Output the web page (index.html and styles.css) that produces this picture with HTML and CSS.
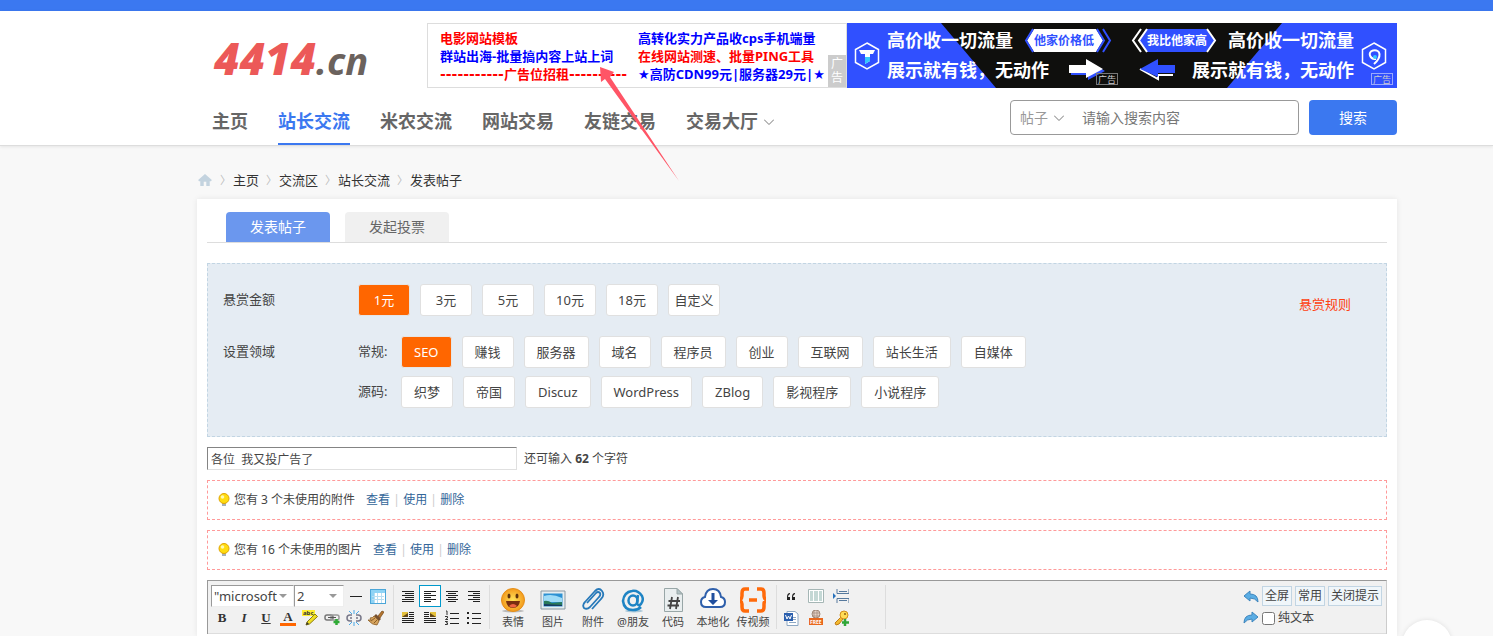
FILE: index.html
```html
<!DOCTYPE html>
<html lang="zh-CN">
<head>
<meta charset="utf-8">
<title>发表帖子 - 站长交流</title>
<link rel="stylesheet" href="styles.css">
</head>
<body>
<div class="topbar"></div>
<header class="header">
  <div class="page">
    <div class="masthead">
      <a class="logo" href="#"><span class="logo-num">4414</span><span class="logo-tld">.cn</span></a>
      <div class="adbox">
        <div class="adcol">
          <a class="red" href="#">电影网站模板</a>
          <a href="#">群站出海-批量搞内容上站上词</a>
          <a class="red" href="#"><span class="dash">-----------</span>广告位招租<span class="dash">----------</span></a>
        </div>
        <div class="adcol">
          <a href="#">高转化实力产品收cps手机端量</a>
          <a class="red" href="#">在线网站测速、批量PING工具</a>
          <a href="#"><span class="star">★</span>高防CDN99元|服务器29元|<span class="star">★</span></a>
        </div>
        <span class="adtag">广告</span>
      </div>
      <a class="banner" href="#">
        <svg viewBox="0 0 275 65">
          <rect width="275" height="65" fill="#3050ff"/>
          <path d="M94 0H275V65H149Z" fill="#0f0f0d"/>
          <path d="M20 20L31.500 26.500V39.500L20 46L8.500 39.500V26.500Z" fill="none" stroke="#fff" stroke-width="1.500"/>
          <path d="M12 27H28L26 31H23V38L18 41V31H14Z" fill="#fff"/><path d="M18 34H23V38L18 41Z" fill="#35c8ff"/>
          <g class="banner-big"><text x="40" y="24">高价收一切流量</text><text x="40" y="54">展示就有钱，无动作</text></g>
          <path d="M187 6H249L256 17.500L249 29H187L180 17.500Z" fill="#fff"/>
          <path d="M186 6L179 17.500L186 29M250 6L257 17.500L250 29M256 6L263 17.500L256 29" fill="none" stroke="#3050ff" stroke-width="2"/>
          <text class="banner-small blue" x="187" y="22">他家价格低</text>
          <path d="M224 44H241V38L258 48L241 57V52H224Z" fill="#3050ff"/>
          <path d="M222 42H239V36L256 46L239 55V50H222Z" fill="#fff"/>
          <rect x="249.500" y="50.500" width="21" height="11" fill="none" stroke="#777"/>
          <text class="banner-tag" x="251" y="60">广告</text>
        </svg>
      </a>
      <a class="banner" href="#">
        <svg viewBox="0 0 275 65">
          <rect width="275" height="65" fill="#3050ff"/>
          <path d="M0 0H160L105 65H0Z" fill="#0f0f0d"/>
          <path d="M252 20L263.500 26.500V39.500L252 46L240.500 39.500V26.500Z" fill="none" stroke="#fff" stroke-width="1.500"/>
          <path d="M254 36C248 37 245 29 251 27.500C259 26 260 34 252 41" fill="none" stroke="#fff" stroke-width="2"/><circle cx="253" cy="34" r="2" fill="#35c8ff"/>
          <g class="banner-big"><text x="106" y="24">高价收一切流量</text><text x="70" y="54">展示就有钱，无动作</text></g>
          <path d="M25 6H84L93 17.500L84 29H25L17 17.500Z" fill="#3050ff"/>
          <path d="M19 6L11 17.500L19 29M25 6L17 17.500L25 29M85 6L93 17.500L85 29" fill="none" stroke="#fff" stroke-width="2"/>
          <text class="banner-small" x="25" y="22">我比他家高</text>
          <path d="M18 46L36 56V52H51" fill="none" stroke="#fff" stroke-width="2"/>
          <path d="M18 46L36 36V42H53V50H36V54Z" fill="#3050ff"/>
          <rect x="249.500" y="50.500" width="21" height="11" fill="none" stroke="#9aa8ff"/>
          <text class="banner-tag" x="251" y="60">广告</text>
        </svg>
      </a>
    </div>
    <div class="navrow">
      <nav class="nav">
        <a href="#">主页</a><a class="on" href="#">站长交流</a><a href="#">米农交流</a><a href="#">网站交易</a><a href="#">友链交易</a><a href="#">交易大厅<svg class="caret" viewBox="0 0 10 10"><path d="M0 2.500L5 7.500L10 2.500"/></svg></a>
      </nav>
      <form class="search">
        <div class="searchbox">
          <button type="button" class="scope">帖子<svg class="caret" viewBox="0 0 10 10"><path d="M0 2.500L5 7.500L10 2.500"/></svg></button>
          <input type="text" aria-label="搜索内容" placeholder="请输入搜索内容">
        </div>
        <button type="submit" class="go">搜索</button>
      </form>
    </div>
  </div>
</header>
<main class="page main">
  <nav class="crumbs">
    <a href="#" aria-label="首页"><svg class="home" viewBox="0 0 16 14"><path d="M8 0L16 7L15 8.500H13.500V14H9.500V9H6.500V14H2.500V8.500H1L0 7Z" fill="#c3d3df"/></svg></a>
    <a href="#">主页</a><a href="#">交流区</a><a href="#">站长交流</a><a href="#">发表帖子</a>
  </nav>
  <section class="card">
    <div class="tabs"><button class="tab on">发表帖子</button><button class="tab">发起投票</button></div>
    <div class="panel">
      <div class="row first">
        <span class="label">悬赏金额</span>
        <div class="chips fixed"><button class="on">1元</button><button>3元</button><button>5元</button><button>10元</button><button>18元</button><button>自定义</button></div>
        <a class="rules" href="#">悬赏规则</a>
      </div>
      <div class="row">
        <span class="label">设置领域</span>
        <div class="fields">
          <div class="field"><span class="sub">常规:</span><div class="chips"><button class="on">SEO</button><button>赚钱</button><button>服务器</button><button>域名</button><button>程序员</button><button>创业</button><button>互联网</button><button>站长生活</button><button>自媒体</button></div></div>
          <div class="field"><span class="sub">源码:</span><div class="chips"><button>织梦</button><button>帝国</button><button>Discuz</button><button>WordPress</button><button>ZBlog</button><button>影视程序</button><button>小说程序</button></div></div>
        </div>
      </div>
    </div>
    <div class="titlerow"><input type="text" aria-label="标题" value="各位&nbsp; 我又投广告了"><span>还可输入 <b>62</b> 个字符</span></div>
    <div class="notice"><svg class="bulb" viewBox="0 0 12 14"><path d="M4 9H8V13H4Z" fill="#a8b0b8"/><circle cx="6" cy="5.500" r="5" fill="#ffdc10" stroke="#e0a400"/><circle cx="4.500" cy="4" r="1.800" fill="#fff9b0"/></svg><span>您有 3 个未使用的附件</span><span class="acts"><a href="#">查看</a><i>|</i><a href="#">使用</a><i>|</i><a href="#">删除</a></span></div>
    <div class="notice"><svg class="bulb" viewBox="0 0 12 14"><path d="M4 9H8V13H4Z" fill="#a8b0b8"/><circle cx="6" cy="5.500" r="5" fill="#ffdc10" stroke="#e0a400"/><circle cx="4.500" cy="4" r="1.800" fill="#fff9b0"/></svg><span>您有 16 个未使用的图片</span><span class="acts"><a href="#">查看</a><i>|</i><a href="#">使用</a><i>|</i><a href="#">删除</a></span></div>
    <div class="editor">
      <div class="toolbar">
        <div class="group">
          <div class="line">
            <span class="pick wide"><select aria-label="字体"><option>"microsoft yahei"</option></select></span><span class="pick"><select aria-label="字号"><option>2</option></select></span>
            <button class="tool gap" aria-label="分隔线"><svg viewBox="0 0 16 16"><path d="M2 8.500H14" stroke="#222"/></svg></button>
            <button class="tool" aria-label="表格"><svg viewBox="0 0 16 16"><rect x=".5" y="1.500" width="15" height="14" fill="#fff" stroke="#4ba6d8"/><path d="M1 2H15V5H1ZM1 5H4V15H1Z" fill="#8ed3f5"/><path d="M4.500 5V15M7.500 5V15M11.500 5V15M2 8.500H14M2 11.500H14" stroke="#b8def2"/></svg></button>
          </div>
          <div class="line">
            <button class="tool letter" aria-label="粗体"><b>B</b></button>
            <button class="tool letter" aria-label="斜体"><em>I</em></button>
            <button class="tool letter" aria-label="下划线"><u>U</u></button>
            <button class="tool letter color" aria-label="文字颜色">A</button>
            <button class="tool" aria-label="背景色"><svg viewBox="0 0 16 16"><rect x="0" y="0" width="13" height="6" fill="#ffee30"/><text x="1" y="5" class="abc">abc</text><path d="M4 15L5 12L13 4L15.500 6.500L7.500 14Z" fill="#f0df22" stroke="#8a7b12"/><path d="M4 15L5 12L7 14Z" fill="#333"/></svg></button>
            <button class="tool" aria-label="链接"><svg viewBox="0 0 16 16"><rect x="1" y="5" width="8" height="5" rx="2" fill="none" stroke="#777" stroke-width="1.500"/><rect x="7" y="5" width="8" height="5" rx="2" fill="none" stroke="#999" stroke-width="1.500"/><path d="M4 7.500H12" stroke="#555"/><path d="M12.500 9V15M9.500 12H15.500" stroke="#2faa35" stroke-width="2.500"/></svg></button>
            <button class="tool" aria-label="移除链接"><svg viewBox="0 0 16 16"><path d="M6 5H4Q1 5 1 8Q1 11 4 11H6M10 5H12Q15 5 15 8Q15 11 12 11H10M4 8H6M10 8H12" fill="none" stroke="#778" stroke-width="1.500"/><path d="M8 0V4M3 1L6 4M13 1L10 4M8 16V12M3 15L6 12M13 15L10 12" stroke="#49a9e8"/></svg></button>
            <button class="tool" aria-label="清除格式"><svg viewBox="0 0 16 16"><path d="M10 6L14 1L16 2L12 8Z" fill="#b47530" stroke="#744613" stroke-width=".7"/><path d="M8 4L13 9L11 11L6 6Z" fill="#765030"/><path d="M6 6L11 11L9 15Q4 15 0 10L3 10L2 8Q5 8 6 6Z" fill="#d6a35d" stroke="#895c25" stroke-width=".8"/><path d="M3 11L7 8M6 13L9 10" stroke="#895c25"/></svg></button>
          </div>
        </div>
        <div class="group">
          <div class="line">
            <button class="tool" aria-label="自动排版"><svg viewBox="0 0 16 16"><path d="M2 3.500H14M5 5.500H14M2 7.500H14M5 9.500H14M2 11.500H14M2 13.500H14" stroke="#222"/></svg></button>
            <button class="tool active" aria-label="居左"><svg viewBox="0 0 16 16"><path d="M2 3.500H14M2 5.500H9M2 7.500H14M2 9.500H9M2 11.500H14M2 13.500H9" stroke="#222"/></svg></button>
            <button class="tool" aria-label="居中"><svg viewBox="0 0 16 16"><path d="M2 3.500H14M4 5.500H12M2 7.500H14M4 9.500H12M2 11.500H14M4 13.500H12" stroke="#222"/></svg></button>
            <button class="tool" aria-label="居右"><svg viewBox="0 0 16 16"><path d="M2 3.500H14M7 5.500H14M2 7.500H14M7 9.500H14M2 11.500H14M7 13.500H14" stroke="#222"/></svg></button>
          </div>
          <div class="line">
            <button class="tool" aria-label="左浮动"><svg viewBox="0 0 16 16"><rect x="2" y="2" width="6" height="5" fill="#e5c13c"/><path d="M2 7L8 3V7Z" fill="#634716"/><path d="M9 2.500H14M9 4.500H14M9 6.500H14M2 8.500H14M2 10.500H14M2 12.500H14" stroke="#222"/></svg></button>
            <button class="tool" aria-label="右浮动"><svg viewBox="0 0 16 16"><rect x="8" y="2" width="6" height="5" fill="#e5c13c"/><path d="M8 3L14 7H8Z" fill="#634716"/><path d="M2 2.500H7M2 4.500H7M2 6.500H7M2 8.500H14M2 10.500H14M2 12.500H14" stroke="#222"/></svg></button>
            <button class="tool" aria-label="编号列表"><svg viewBox="0 0 16 16"><path d="M6 3.500H15M6 8.500H15M6 13.500H15" stroke="#222"/><path d="M2 1H3V5M1 6.500H3.500V8L1.500 9.500H4M1 11.500H3.500L2.500 13H3.500V14.500H1" fill="none" stroke="#333"/></svg></button>
            <button class="tool" aria-label="项目列表"><svg viewBox="0 0 16 16"><path d="M6 3.500H15M6 8.500H15M6 13.500H15" stroke="#222"/><path d="M1 2H3V4H1ZM1 7H3V9H1ZM1 12H3V14H1Z" fill="#222"/></svg></button>
          </div>
        </div>
        <div class="group bigs">
          <button class="big"><svg viewBox="0 0 26 26"><defs><radialGradient id="face"><stop offset="0" stop-color="#ffe45a"/><stop offset="1" stop-color="#f39a1c"/></radialGradient></defs><ellipse cx="13" cy="24" rx="11" ry="1.500" fill="#bbb"/><circle cx="13" cy="13" r="11.500" fill="url(#face)" stroke="#e58f18"/><ellipse cx="9" cy="9" rx="1.500" ry="2.500" fill="#5f320b"/><ellipse cx="17" cy="9" rx="1.500" ry="2.500" fill="#5f320b"/><path d="M6 14H20Q19 21 13 21Q7 21 6 14Z" fill="#792f10"/><path d="M9 19Q13 15 17 19Q13 22 9 19Z" fill="#ee6542"/></svg>表情</button>
          <button class="big"><svg viewBox="0 0 26 26"><path d="M1 4H25V22H1Z" fill="#e6edf0" stroke="#8998a2"/><path d="M3.500 6.500H22.500V19.500H3.500Z" fill="#2c91d3"/><path d="M4 9Q12 6 22 11V15H4Z" fill="#9edbf7"/><path d="M4 14Q8 13 12 16L22 15V19H4Z" fill="#2a7a5a"/><path d="M4 17L22 18V19H4Z" fill="#173c65"/></svg>图片</button>
          <button class="big"><svg viewBox="0 0 26 26"><path d="M7 16L16 6Q18 4 20 6Q21 8 19 10L10 20Q7 23 4 21Q2 18 5 15L15 4Q19 0 22 4Q25 8 21 12L12 22" fill="none" stroke="#2779b9" stroke-width="1.800"/></svg>附件</button>
          <button class="big"><svg viewBox="0 0 26 26"><ellipse cx="14" cy="24" rx="9" ry="1.500" fill="#aac7d8"/><ellipse cx="13" cy="13.500" rx="4.500" ry="5" fill="none" stroke="#1e84c4" stroke-width="2.500"/><path d="M18 8L17 16Q18 20 21 17Q24 13 22 9Q18 3 12 4Q4 5 3 14Q4 23 13 23Q18 23 21 20" fill="none" stroke="#1e84c4" stroke-width="2.500"/></svg>@朋友</button>
          <button class="big"><svg viewBox="0 0 26 26"><path d="M4.500 1.500H17L22.500 7V24.500H4.500Z" fill="#e9eeef" stroke="#98a6a7"/><path d="M17 1.500V7H22.500Z" fill="#b1c2c4" stroke="#98a6a7"/><path d="M12 10L10 22M18 10L16 22M8.500 14H20M7.500 18.500H19" stroke="#444" stroke-width="1.800"/></svg>代码</button>
          <button class="big"><svg viewBox="0 0 26 26"><path d="M6 20Q1 20 1 15Q1 11 5 10Q6 2 13 2Q20 2 21 10Q25 11 25 15Q25 20 20 20Z" fill="#fff" stroke="#2e5fab" stroke-width="2"/><path d="M11.500 6H14.500V13H18L13 18L8 13H11.500Z" fill="#204f9e"/></svg>本地化</button>
          <button class="big"><svg viewBox="0 0 26 26"><path d="M9 2H5Q2 2 2 6V9Q2 11 0 13Q2 15 2 17V20Q2 24 5 24H9M17 2H21Q24 2 24 6V9Q24 11 26 13Q24 15 24 17V20Q24 24 21 24H17M9 13H17" fill="none" stroke="#ff6a0a" stroke-width="3.500"/></svg>传视频</button>
        </div>
        <div class="group extras">
          <div class="line">
            <button class="tool" aria-label="引用"><svg viewBox="0 0 16 16"><path d="M7 5Q4 5 4 9V12H7V9H5Q5 7 7 6ZM12 5Q9 5 9 9V12H12V9H10Q10 7 12 6Z" fill="#222"/></svg></button>
            <button class="tool" aria-label="分栏"><svg viewBox="0 0 16 16"><path d="M.5 1.500H15.500V14.500H.5Z" fill="#fff" stroke="#a5b6b5"/><path d="M2 3H5V13H2ZM6 3H10V13H6ZM11 3H14V13H11Z" fill="#c4d8d5"/></svg></button>
            <button class="tool" aria-label="分页"><svg viewBox="0 0 16 16"><path d="M4 1V5.500H16V1M4 15V10.500H16V15M6 3.500H14M6 12.500H14" fill="none" stroke="#56799d"/><path d="M0 5L3 8L0 11Z" fill="#2670bc"/></svg></button>
          </div>
          <div class="line">
            <button class="tool" aria-label="Word"><svg viewBox="0 0 16 16"><path d="M5 1.500H12L15 4V15.500H4V1.500Z" fill="#fff" stroke="#8ca7c3"/><path d="M10 7.500H13M10 9.500H13M6 12.500H13" stroke="#8ca7c3"/><rect x="1" y="3" width="9" height="8" fill="#2b5fae"/><path d="M2.500 5L4 9L5.500 6L7 9L8.500 5" fill="none" stroke="#fff"/></svg></button>
            <button class="tool" aria-label="免费信息"><svg viewBox="0 0 16 16"><circle cx="8" cy="4" r="4" fill="#e3d1c7" stroke="#9e887a"/><path d="M4 3H12M4 6H12M6 0V8M9 0V8" stroke="#9e887a" stroke-width=".7"/><rect x="1" y="8" width="14" height="7" fill="#e8681e"/><text x="2" y="14" class="free">FREE</text></svg></button>
            <button class="tool" aria-label="密码"><svg viewBox="0 0 16 16"><path d="M8 7L2 13L3 15L6 14L10 9" fill="#f2ba32" stroke="#c17b13"/><circle cx="11" cy="5" r="4" fill="#ffdc55" stroke="#d18e1e"/><circle cx="12" cy="4" r="1" fill="#8c6014"/><path d="M12 9V16M9 12.500H16" stroke="#30a638" stroke-width="2.500"/></svg></button>
          </div>
        </div>
        <div class="modes">
          <div class="line"><button class="tool" aria-label="撤销"><svg viewBox="0 0 16 16"><path d="M1 8L7 3V6Q15 6 15 14Q12 10 7 10V13Z" fill="#5aade4" stroke="#3e85bd"/></svg></button><button class="mode">全屏</button><button class="mode">常用</button><button class="mode">关闭提示</button></div>
          <div class="line"><button class="tool" aria-label="重做"><svg viewBox="0 0 16 16"><path d="M15 7L9 2V5Q1 5 1 13Q4 9 9 9V12Z" fill="#5aade4" stroke="#3e85bd"/></svg></button><label class="plain"><input type="checkbox">纯文本</label></div>
        </div>
      </div>
    </div>
  </section>
</main>
<button class="float" aria-label="返回顶部"></button>
<svg class="pointer" viewBox="0 0 80 115"><path d="M0 0L14 5L10 10L79 114L5 12L1 15Z" fill="#ff5566"/></svg>
</body>
</html>
```
FILE: styles.css
```css
* { box-sizing: border-box; }
body {
  margin: 0;
  height: 100vh;
  display: flex;
  flex-direction: column;
  overflow: hidden;
  background: #f8f8f8;
  color: #444;
  font: 12px/20px "Noto Sans", "Noto Sans CJK SC", sans-serif;
}
a { color: inherit; text-decoration: none; }
button, input, select { font: inherit; color: inherit; }
button { margin: 0; padding: 0; border: 0; background: none; }
svg { display: block; flex: none; }
.page { padding: 0 96px 0 197px; }
.topbar { flex: none; height: 11px; background: #3b78f0; }
.header { flex: none; background: #fff; border-bottom: 1px solid #ddd; box-shadow: 0 1px 3px rgba(0, 0, 0, .08); }
.masthead { display: flex; padding-top: 12px; }
.logo { display: flex; flex: 1; align-items: baseline; height: 65px; padding: 7px 0 0 17px; font-family: "Open Sans", sans-serif; font-style: italic; font-weight: 800; white-space: nowrap; line-height: 56px; }
.logo-num { color: #ec5958; font-size: 44px; }
.logo-tld { color: #6b625d; font-size: 38px; font-weight: 700; }
.adbox { position: relative; display: flex; width: 420px; height: 65px; padding: 5px 0 0 12px; border: 1px solid #ddd; font-size: 13px; line-height: 18px; font-weight: 700; color: #00f; }
.adcol { display: flex; flex-direction: column; width: 198px; white-space: nowrap; }
.red { color: #f00; }
.dash { font-family: "DejaVu Sans", sans-serif; font-size: 14px; font-weight: 700; line-height: 16px; }
.star { font-family: "DejaVu Sans", sans-serif; font-weight: 400; line-height: 16px; }
.adtag { position: absolute; right: 0; bottom: 0; width: 18px; padding: 2px 3px; background: #ccc; color: #fff; font-size: 12px; line-height: 14px; font-weight: 400; }
.banner { width: 275px; height: 65px; }
.banner svg { width: 275px; height: 65px; }
.banner-big { fill: #fff; font-size: 18px; font-weight: 700; }
.banner-small { fill: #fff; font-size: 12px; font-weight: 700; }
.banner-small.blue { fill: #3050ff; }
.banner-tag { fill: #ccc; font-size: 9px; }
.navrow { display: flex; justify-content: space-between; padding-top: 12px; }
.nav { display: flex; gap: 30px; padding-left: 15px; font-size: 18px; line-height: 43px; font-weight: 700; color: #666; }
.nav a { display: flex; align-items: center; height: 45px; border-bottom: 2px solid transparent; white-space: nowrap; }
.nav .on { color: #3b78f0; border-color: #3b78f0; }
.caret { width: 10px; height: 10px; margin-left: 6px; fill: none; stroke: #777; }
.search { display: flex; gap: 10px; height: 35px; font-size: 14px; }
.searchbox { display: flex; align-items: center; width: 289px; padding-left: 9px; border: 1px solid #999; border-radius: 4px; }
.scope { display: flex; align-items: center; color: #999; }
.searchbox input { flex: 1; min-width: 0; margin-left: 18px; padding: 0; border: 0; outline: 0; background: none; }
.searchbox input::placeholder { color: #777; }
.go { width: 88px; border-radius: 4px; background: #3b78f0; color: #fff; }

.main { flex: 1; min-height: 0; display: flex; flex-direction: column; }
.crumbs { display: flex; align-items: center; padding: 24px 0 9px; font-size: 13px; color: #333; }
.home { width: 16px; height: 12px; }
.crumbs a + a { display: flex; align-items: center; }
.crumbs a + a::before { content: "〉"; width: 13px; margin: 0 0 0 7px; color: #bbb; font-size: 11px; }
.card { flex: 1; padding: 13px 10px 0; background: #fff; box-shadow: 0 0 6px rgba(0, 0, 0, .08); }
.tabs { display: flex; gap: 15px; padding-left: 19px; border-bottom: 1px solid #ddd; }
.tab { width: 104px; height: 30px; border-radius: 4px 4px 0 0; background: #f0f0f0; color: #666; font-size: 14px; }
.tab.on { background: #6b97ee; color: #fff; }
.panel { margin-top: 20px; padding: 20px 35px 28px 15px; border: 1px dashed #c2d5e3; background: #e5ecf3; font-size: 13px; }
.row { display: flex; }
.first { margin-bottom: 20px; }
.label { width: 135px; line-height: 30px; }
.chips { display: flex; flex-wrap: wrap; gap: 10px; }
.chips button { height: 32px; padding: 0 12px; border: 1px solid #e0e0e0; border-radius: 3px; background: #fff; white-space: nowrap; }
.chips.fixed button { width: 52px; padding: 0; }
.chips .on { border-color: #e5e5e5; background: #f60; color: #fff; }
.rules { height: 32px; margin-left: auto; line-height: 40px; color: #ff4010; }
.fields { display: flex; flex-direction: column; gap: 8px; }
.field { display: flex; }
.sub { width: 43px; line-height: 30px; }
.titlerow { display: flex; align-items: center; gap: 7px; margin: 10px 0; }
.titlerow input { width: 310px; height: 23px; padding: 0 3px; border: 1px solid; border-color: #848484 #e0e0e0 #e0e0e0 #848484; background: #fff; }
.notice { display: flex; align-items: center; height: 40px; margin-bottom: 10px; padding-left: 10px; border: 1px dashed #ff9a9a; }
.bulb { width: 12px; height: 14px; margin-right: 4px; }
.acts { display: flex; margin-left: 11px; color: #369; }
.acts i { width: 13px; text-align: center; font-style: normal; color: #ccc; }
.editor { border: 1px solid #999; border-right-color: #ccc; border-bottom: 0; }
.toolbar { display: flex; height: 53px; padding: 4px 3px; border-bottom: 1px solid #ddd; background: #f1f1f1; }
.group { margin-right: 3px; padding-right: 4px; border-right: 1px solid #ddd; }
.line { display: flex; align-items: center; height: 22px; }
.tool { display: flex; align-items: center; justify-content: center; width: 22px; height: 22px; }
.tool svg { width: 16px; height: 16px; }
.tool.active { border: 1px solid #09c; background: #fff; }
.tool.gap { margin-left: 1px; }
.letter { font: 700 13px/16px "Liberation Serif", serif; color: #333; }
.color { height: 16px; border-bottom: 3px solid #f60; width: 16px; margin: 0 3px; line-height: 12px; }
.abc { font-size: 6px; font-weight: 700; fill: #333; }
.free { font-size: 5px; font-weight: 700; fill: #fff; }
.pick { position: relative; width: 50px; }
.pick.wide { width: 83px; }
.pick select { display: block; width: 100%; height: 22px; padding: 0 16px 0 2px; appearance: none; border: 1px solid; border-color: #999 #eee #eee #999; border-radius: 0; background: #fff; font-size: 13px; }
.pick::after { content: ""; position: absolute; right: 7px; top: 9px; border: 4px solid transparent; border-top-color: #999; border-bottom: 0; }
.bigs { display: flex; padding-right: 3px; }
.big { display: flex; flex-direction: column; align-items: center; width: 40px; font-size: 11px; line-height: 16px; white-space: nowrap; }
.big svg { width: 26px; height: 26px; margin: 2px 0 1px; }
.extras { width: 106px; }
.extras .line { gap: 3px; }
.modes { margin-left: auto; }
.mode { height: 20px; margin-right: 3px; padding: 0 2px; border: 1px solid #c2d5e3; background: #f0f6fa; line-height: 18px; }
.mode:last-child { margin-right: 1px; }
.plain { display: flex; align-items: center; gap: 3px; }
.plain input { width: 13px; height: 13px; margin: 0; }
.float { position: fixed; right: 41px; bottom: -34px; width: 50px; height: 50px; border-radius: 50%; background: #fff; box-shadow: 0 0 5px rgba(0, 0, 0, .1); }
.pointer { position: absolute; left: 600px; top: 67px; width: 80px; height: 115px; pointer-events: none; }
```
